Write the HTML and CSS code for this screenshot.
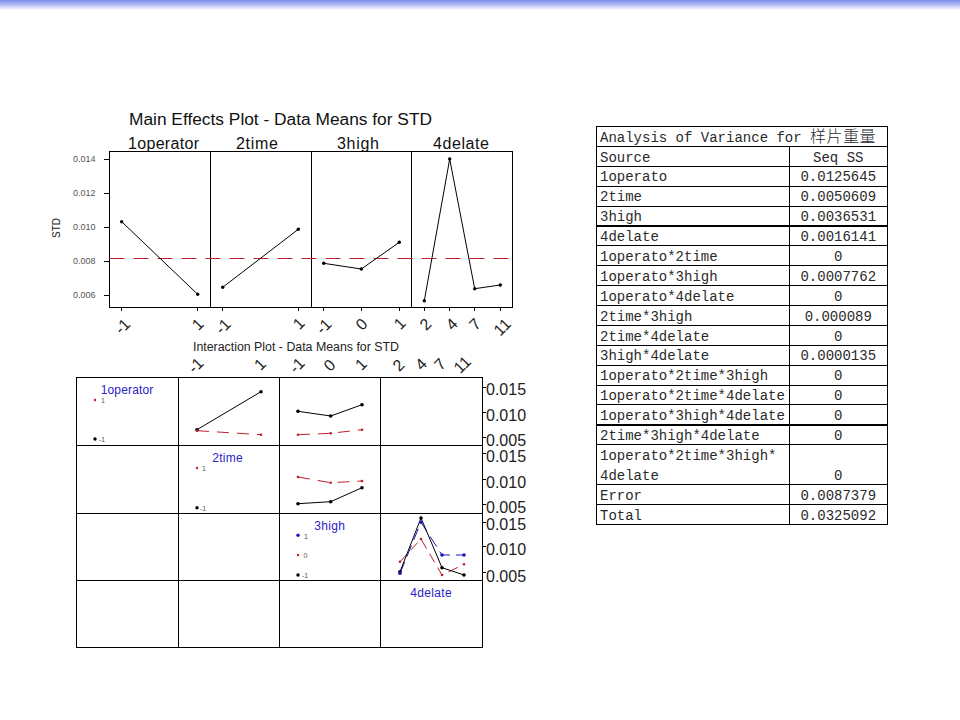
FILE: index.html
```html
<!DOCTYPE html>
<html lang="en">
<head>
<meta charset="utf-8">
<title>Main Effects and Interaction Plots</title>
<link rel="stylesheet" href="styles.css">
</head>
<body>
<div class="topbar"></div>
<main class="content">
<svg class="plots" width="500" height="560" viewBox="40 100 500 560" xmlns="http://www.w3.org/2000/svg">
  <!-- Main effects -->
  <text class="title" x="129" y="125" textLength="303" lengthAdjust="spacingAndGlyphs">Main Effects Plot - Data Means for STD</text>
  <text class="head" x="128" y="149" textLength="71">1operator</text>
  <text class="head" x="236" y="149" textLength="42">2time</text>
  <text class="head" x="337" y="149" textLength="42">3high</text>
  <text class="head" x="433" y="149" textLength="56">4delate</text>

  <rect class="frame" x="109.5" y="151.5" width="403" height="156"/>
  <path class="frame" d="M210.5 151.5V307.5M311.5 151.5V307.5M411.5 151.5V307.5"/>
  <path class="frame" d="M104 159.5H109M104 193.5H109M104 227.5H109M104 261.5H109M104 295.5H109"/>
  <path class="frame" d="M121.5 307.5V311M197.5 307.5V311M222.5 307.5V311M298.5 307.5V311M323.5 307.5V311M361.5 307.5V311M399.5 307.5V311M424.5 307.5V311M449.5 307.5V311M474.5 307.5V311M500.5 307.5V311"/>

  <text class="small" x="73" y="162">0.014</text>
  <text class="small" x="73" y="196">0.012</text>
  <text class="small" x="73" y="230">0.010</text>
  <text class="small" x="73" y="264">0.008</text>
  <text class="small" x="73" y="298">0.006</text>
  <text class="axis-y" transform="translate(60 228) rotate(-90)">STD</text>

  <path class="dash-red mean" d="M109.5 258.5H509"/>
  <polyline class="line" points="121.7,221.7 197.7,294.3"/>
  <polyline class="line" points="222.7,287.3 298.3,229.3"/>
  <polyline class="line" points="323.7,263.3 361.3,269 399.3,242.3"/>
  <polyline class="line" points="424.3,300.7 449.7,159 474.7,288.7 500.3,285"/>
  <g class="pt-black">
    <circle cx="121.7" cy="221.7" r="1.7"/><circle cx="197.7" cy="294.3" r="1.7"/>
    <circle cx="222.7" cy="287.3" r="1.7"/><circle cx="298.3" cy="229.3" r="1.7"/>
    <circle cx="323.7" cy="263.3" r="1.7"/><circle cx="361.3" cy="269" r="1.7"/><circle cx="399.3" cy="242.3" r="1.7"/>
    <circle cx="424.3" cy="300.7" r="1.7"/><circle cx="449.7" cy="159" r="1.7"/><circle cx="474.7" cy="288.7" r="1.7"/><circle cx="500.3" cy="285" r="1.7"/>
  </g>

  <text class="tick" transform="translate(126.2 330.2) rotate(-45)">-1</text>
  <text class="tick" transform="translate(201.7 328) rotate(-45)">1</text>
  <text class="tick" transform="translate(226.8 330.2) rotate(-45)">-1</text>
  <text class="tick" transform="translate(302.7 327.3) rotate(-45)">1</text>
  <text class="tick" transform="translate(327.5 330.2) rotate(-45)">-1</text>
  <text class="tick" transform="translate(365.3 328) rotate(-45)">0</text>
  <text class="tick" transform="translate(403.7 327.3) rotate(-45)">1</text>
  <text class="tick" transform="translate(429.3 328) rotate(-45)">2</text>
  <text class="tick" transform="translate(455.7 328) rotate(-45)">4</text>
  <text class="tick" transform="translate(479 328) rotate(-45)">7</text>
  <text class="tick" transform="translate(506.2 330.8) rotate(-45)">11</text>

  <!-- Interaction plot -->
  <text class="title2" x="193" y="351" textLength="206" lengthAdjust="spacingAndGlyphs">Interaction Plot - Data Means for STD</text>
  <text class="tick" transform="translate(199.5 369.2) rotate(-45)">-1</text>
  <text class="tick" transform="translate(264 368) rotate(-45)">1</text>
  <text class="tick" transform="translate(300.8 369.2) rotate(-45)">-1</text>
  <text class="tick" transform="translate(333.3 369) rotate(-45)">0</text>
  <text class="tick" transform="translate(365 368) rotate(-45)">1</text>
  <text class="tick" transform="translate(402.3 369) rotate(-45)">2</text>
  <text class="tick" transform="translate(425 368) rotate(-45)">4</text>
  <text class="tick" transform="translate(444 368) rotate(-45)">7</text>
  <text class="tick" transform="translate(466.2 368.5) rotate(-45)">11</text>

  <rect class="frame" x="76.5" y="377.5" width="406" height="270"/>
  <path class="frame" d="M178.5 377.5V647.5M279.5 377.5V647.5M380.5 377.5V647.5M76.5 445.5H482.5M76.5 513.5H482.5M76.5 580.5H482.5"/>
  <path class="frame" d="M482.5 387.5H486M482.5 412.5H486M482.5 437.5H486M482.5 453.5H486M482.5 479.5H486M482.5 504.5H486M482.5 522.5H486M482.5 546.5H486M482.5 572.5H486"/>

  <text class="scale" x="486" y="394.5">0.015</text>
  <text class="scale" x="486" y="420.5">0.010</text>
  <text class="scale" x="486" y="446">0.005</text>
  <text class="scale" x="486" y="461.5">0.015</text>
  <text class="scale" x="486" y="487.5">0.010</text>
  <text class="scale" x="486" y="512.5">0.005</text>
  <text class="scale" x="486" y="529.5">0.015</text>
  <text class="scale" x="486" y="554.5">0.010</text>
  <text class="scale" x="486" y="581.5">0.005</text>

  <text class="name" x="100.7" y="394" textLength="52.6">1operator</text>
  <circle class="dot-red" cx="95" cy="400" r="1.2"/><text class="legend" x="101" y="403">1</text>
  <circle class="dot-black" cx="95" cy="439" r="1.7"/><text class="legend" x="99" y="442">-1</text>

  <text class="name" x="212.3" y="461.7" textLength="30.4">2time</text>
  <circle class="dot-red" cx="197" cy="468" r="1.2"/><text class="legend" x="202" y="471">1</text>
  <circle class="dot-black" cx="197" cy="507.7" r="1.7"/><text class="legend" x="200" y="511">-1</text>

  <text class="name" x="314.3" y="530" textLength="30.7">3high</text>
  <circle class="dot-blue" cx="298" cy="535.3" r="1.7"/><text class="legend" x="304" y="538.5">1</text>
  <circle class="dot-red" cx="298" cy="555" r="1.2"/><text class="legend" x="303.5" y="558">0</text>
  <circle class="dot-black" cx="298" cy="575" r="1.7"/><text class="legend" x="302" y="578">-1</text>

  <text class="name" x="410.3" y="597" textLength="41.4">4delate</text>

  <polyline class="line" points="197,429.7 261,391.7"/>
  <polyline class="dash-red" points="197,430.7 261,434.7"/>
  <polyline class="line" points="298,411.3 330.7,416 362,404.7"/>
  <polyline class="dash-red" points="298,434.7 330.7,433.3 362,429.7"/>
  <polyline class="dash-red" points="298,477 330.7,482.7 362,481"/>
  <polyline class="line" points="298,503.7 330.7,501.7 362,487.7"/>
  <polyline class="dash-blue" points="400,573.3 421,522.3 442,555 464,555"/>
  <polyline class="dash-red thin" points="400,561.7 421,539 442,575 464,564.3"/>
  <polyline class="line" points="400,571.7 421,518 442,567.7 464,575"/>

  <g class="pt-black">
    <circle cx="197" cy="429.7" r="1.8"/><circle cx="261" cy="391.7" r="1.8"/>
    <circle cx="298" cy="411.3" r="1.8"/><circle cx="330.7" cy="416" r="1.8"/><circle cx="362" cy="404.7" r="1.8"/>
    <circle cx="298" cy="503.7" r="1.8"/><circle cx="330.7" cy="501.7" r="1.8"/><circle cx="362" cy="487.7" r="1.8"/>
    <circle cx="400" cy="571.7" r="1.8"/><circle cx="421" cy="518" r="1.8"/><circle cx="442" cy="567.7" r="1.8"/><circle cx="464" cy="575" r="1.8"/>
  </g>
  <g class="pt-red">
    <circle cx="197" cy="430.7" r="1.3"/><circle cx="261" cy="434.7" r="1.3"/>
    <circle cx="298" cy="434.7" r="1.3"/><circle cx="330.7" cy="433.3" r="1.3"/><circle cx="362" cy="429.7" r="1.3"/>
    <circle cx="298" cy="477" r="1.3"/><circle cx="330.7" cy="482.7" r="1.3"/><circle cx="362" cy="481" r="1.3"/>
    <circle cx="400" cy="561.7" r="1.3"/><circle cx="421" cy="539" r="1.3"/><circle cx="442" cy="575" r="1.3"/><circle cx="464" cy="564.3" r="1.3"/>
  </g>
  <g class="pt-blue">
    <circle cx="400" cy="573.3" r="1.8"/><circle cx="421" cy="522.3" r="1.8"/><circle cx="442" cy="555" r="1.8"/><circle cx="464" cy="555" r="1.8"/>
  </g>
</svg>

<table class="anova">
  <colgroup><col class="col-source"><col class="col-value"></colgroup>
  <tr><td colspan="2">Analysis of Variance for <span class="cjk">样片重量</span></td></tr>
  <tr><td>Source</td><td class="num">Seq SS</td></tr>
  <tr><td>1operato</td><td class="num">0.0125645</td></tr>
  <tr><td>2time</td><td class="num">0.0050609</td></tr>
  <tr class="heavy"><td>3high</td><td class="num">0.0036531</td></tr>
  <tr><td>4delate</td><td class="num">0.0016141</td></tr>
  <tr><td>1operato*2time</td><td class="num">0</td></tr>
  <tr><td>1operato*3high</td><td class="num">0.0007762</td></tr>
  <tr><td>1operato*4delate</td><td class="num">0</td></tr>
  <tr><td>2time*3high</td><td class="num">0.000089</td></tr>
  <tr><td>2time*4delate</td><td class="num">0</td></tr>
  <tr><td>3high*4delate</td><td class="num">0.0000135</td></tr>
  <tr><td>1operato*2time*3high</td><td class="num">0</td></tr>
  <tr><td>1operato*2time*4delate</td><td class="num">0</td></tr>
  <tr class="heavy"><td>1operato*3high*4delate</td><td class="num">0</td></tr>
  <tr><td>2time*3high*4delate</td><td class="num">0</td></tr>
  <tr class="joined"><td>1operato*2time*3high*</td><td class="num"></td></tr>
  <tr><td>4delate</td><td class="num">0</td></tr>
  <tr><td>Error</td><td class="num">0.0087379</td></tr>
  <tr><td>Total</td><td class="num">0.0325092</td></tr>
</table>
</main>
</body>
</html>
```
FILE: styles.css
```css
* { box-sizing: border-box; }
html, body { margin: 0; padding: 0; background: #fff; }
body { width: 960px; height: 720px; overflow: hidden; }

.topbar {
  height: 10px;
  background: linear-gradient(to bottom, #7c8de8 0%, #a9b5f0 40%, #dfe3fa 80%, #ffffff 100%);
}

.content {
  display: flex;
  align-items: flex-start;
  padding: 90px 0 0 40px;
}

.plots { display: block; flex: none; }
.plots text { font-family: "Liberation Sans", Arial, sans-serif; }

.title { font-size: 16px; fill: #111; }
.head { font-size: 16px; fill: #111; }
.title2 { font-size: 12px; fill: #222; }
.small { font-size: 9px; fill: #555; }
.axis-y { font-size: 10px; fill: #222; text-anchor: middle; }
.tick { font-size: 16px; fill: #222; text-anchor: middle; }
.scale { font-size: 16px; fill: #222; }
.name { font-size: 12px; fill: #2a22c8; }
.legend { font-size: 7px; fill: #555; }

.frame { fill: none; stroke: #000; stroke-width: 1; }
.line { fill: none; stroke: #000; stroke-width: 1; }
.dash-red { fill: none; stroke: #c0202c; stroke-width: 1; stroke-dasharray: 12 8; }
.mean { stroke-dasharray: 15 9; }
.thin { stroke-dasharray: 10 6; }
.dash-blue { fill: none; stroke: #1818c0; stroke-width: 1; stroke-dasharray: 12 6; }

.pt-black, .dot-black { fill: #000; }
.pt-red, .dot-red { fill: #c0202c; }
.pt-blue, .dot-blue { fill: #1818c0; }

.anova {
  flex: none;
  margin: 26px 0 0 56px;
  width: 291px;
  border-collapse: collapse;
  table-layout: fixed;
  font-family: "Liberation Mono", "Noto Sans CJK SC", monospace;
  font-size: 14px;
  color: #2a2a2a;
}
.col-source { width: 192.5px; }
.col-value { width: 98.5px; }
.cjk { font-family: "Noto Sans CJK SC", sans-serif; font-size: 16px; font-weight: 300; line-height: 0; letter-spacing: 0.5px; }
.anova tr { height: 19.9px; }
.anova td {
  padding: 3px 0 0 3px;
  border: 1px solid #000;
  white-space: nowrap;
  line-height: 14.5px;
}
.anova .num { text-align: center; padding-left: 0; }
.anova .heavy td { border-bottom: 2px solid #000; }
.anova .joined td { border-bottom: 0; }
.anova .joined + tr td { border-top: 0; }
```
